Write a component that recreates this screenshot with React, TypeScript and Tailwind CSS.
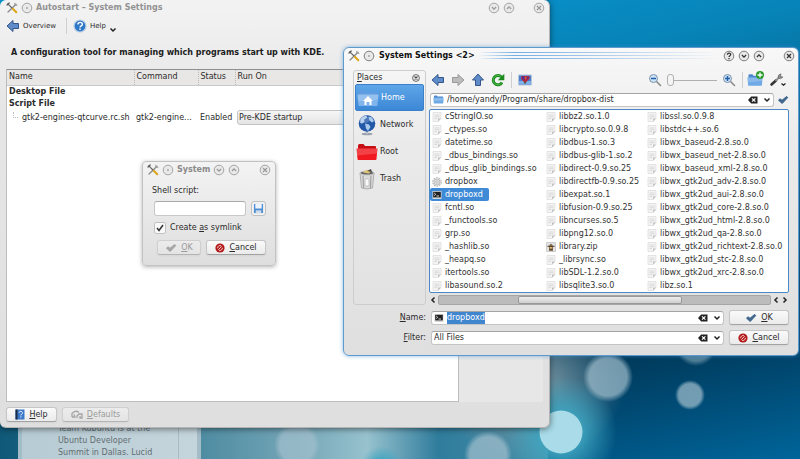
import type { ReactNode } from 'react';

const files = [
    ['cStringIO.so', '_ctypes.so', 'datetime.so', '_dbus_bindings.so', '_dbus_glib_bindings.so', 'dropbox', 'dropboxd', 'fcntl.so', '_functools.so', 'grp.so', '_hashlib.so', '_heapq.so', 'itertools.so', 'libasound.so.2'],
    ['libbz2.so.1.0', 'libcrypto.so.0.9.8', 'libdbus-1.so.3', 'libdbus-glib-1.so.2', 'libdirect-0.9.so.25', 'libdirectfb-0.9.so.25', 'libexpat.so.1', 'libfusion-0.9.so.25', 'libncurses.so.5', 'libpng12.so.0', 'library.zip', '_librsync.so', 'libSDL-1.2.so.0', 'libsqlite3.so.0'],
    ['libssl.so.0.9.8', 'libstdc++.so.6', 'libwx_baseud-2.8.so.0', 'libwx_baseud_net-2.8.so.0', 'libwx_baseud_xml-2.8.so.0', 'libwx_gtk2ud_adv-2.8.so.0', 'libwx_gtk2ud_aui-2.8.so.0', 'libwx_gtk2ud_core-2.8.so.0', 'libwx_gtk2ud_html-2.8.so.0', 'libwx_gtk2ud_qa-2.8.so.0', 'libwx_gtk2ud_richtext-2.8.so.0', 'libwx_gtk2ud_stc-2.8.so.0', 'libwx_gtk2ud_xrc-2.8.so.0', 'libz.so.1'],
];

function ToolsIcon() {
    return (
        <svg viewBox="0 0 12 12" className="size-3 shrink-0" fill="none" strokeLinecap="round">
            <path d="M10 2.200 2 10" stroke="#8b8b8b" strokeWidth="1.300" />
            <path d="M1.800 1.800 6 6" stroke="#666" strokeWidth="1.200" />
            <path d="M1 3 3.200 1" stroke="#555" strokeWidth="1.200" />
            <path d="m6.800 6.800 3.500 3.500" stroke="#dba51c" strokeWidth="2" />
            <path d="M8.800 1.200 9 3l2 .3" stroke="#999" strokeWidth="1" />
        </svg>
    );
}

type Glyph = 'dot' | 'help' | 'down' | 'up' | 'close';

function WindowButton({ glyph, label, faded }: { glyph: Glyph; label: string; faded?: boolean }) {
    const ink = faded ? '#9a9a9a' : '#333';
    return (
        <button aria-label={label} className="size-3 shrink-0">
            <svg viewBox="0 0 12 12" className="size-3" fill="none" stroke={ink} strokeWidth="1.3">
                <circle cx="6" cy="6" r="4.800" fill="#e9e9e9" stroke={faded ? '#9c9c9c' : '#707070'} strokeWidth="0.9" />
                {glyph === 'dot' && <circle cx="6" cy="6" r="0.8" fill="#777" stroke="none" />}
                {glyph === 'help' && <path d="M4.4 4.8c0-2.2 3.3-2.1 3.3-.2C7.700 5.700 6 5.700 6 7M6 8v1.200" />}
                {glyph === 'down' && <path d="m3.900 5 2.100 2.100L8.100 5" />}
                {glyph === 'up' && <path d="m3.900 7 2.100-2.100L8.100 7" />}
                {glyph === 'close' && <path d="m4 4 4 4m0-4L4 8" />}
            </svg>
        </button>
    );
}

function ArrowIcon({ dir, gray }: { dir: 'left' | 'right' | 'up'; gray?: boolean }) {
    const d = {
        left: 'M1 7 7 1.500v3h5.500v5H7v3z',
        right: 'M13 7 7 1.500v3H1.500v5H7v3z',
        up: 'M7 1 1.500 7h3v5.500h5V7h3z',
    }[dir];
    return (
        <svg viewBox="0 0 14 14" className="size-3.5 shrink-0">
            <path d={d} fill={gray ? '#bcbcbc' : '#5f8bc8'} stroke={gray ? '#999' : '#34568a'} strokeLinejoin="round" />
        </svg>
    );
}

function CheckIcon({ color }: { color: string }) {
    return (
        <svg viewBox="0 0 12 10" className="h-2.5 w-3 shrink-0">
            <path d="M1.500 5.200 3 3.800l2 1.500L9.500 1.500l1.300 1L5.200 8.500z" fill={color} stroke={color} strokeLinejoin="round" />
        </svg>
    );
}

function CancelIcon() {
    return (
        <svg viewBox="0 0 10 10" className="size-2.5 shrink-0">
            <circle cx="5" cy="5" r="4.600" fill="#b41a1a" />
            <path d="M2.600 5.200A2.500 2.500 0 0 1 6 2.700M7.400 4.800A2.500 2.500 0 0 1 4 7.300M3.300 6.700l3.400-3.400" fill="none" stroke="#f6dcdc" strokeWidth=".9" />
        </svg>
    );
}

function ClearIcon() {
    return (
        <svg viewBox="0 0 10 8" className="h-2 w-2.5">
            <path d="M0 4 3.200.500H9.500v7H3.200z" fill="#222" />
            <path d="m4 2.300 3.400 3.400m0-3.400L4 5.700" stroke="#fff" strokeWidth="1.200" />
        </svg>
    );
}

function Chevron() {
    return (
        <svg viewBox="0 0 8 6" className="h-1.5 w-2 shrink-0" fill="none">
            <path d="m1.500 1.500 2.500 2.500 2.500-2.500" stroke="#222" strokeWidth="1.500" />
        </svg>
    );
}

function FolderIcon({ className, color, lid }: { className: string; color: string; lid: string }) {
    return (
        <svg viewBox="0 0 22 18" className={className}>
            <path d="M2 2.500q0-1.500 1.500-1.500h4l1.500 2h10q1 0 1 1v5H2z" fill={lid} />
            <path d="M.500 5.500h21L20.500 16q0 1-1 1h-17q-1 0-1-1z" fill={color} />
            <path d="M.500 5.500h21l-.5 5-20 2z" fill="#fff" opacity=".18" />
        </svg>
    );
}

function FileIcon({ name }: { name: string }) {
    if (name === 'dropboxd') {
        return (
            <svg viewBox="0 0 10 10" className="size-2.5 shrink-0">
                <path d="M.500 1h9v8h-9z" fill="#d8d8d8" />
                <path d="M1.200 1.800h7.600v5.600H1.200z" fill="#222" />
                <path d="m2.200 3 1.500 1.300-1.500 1.300M4.500 6h2.500" fill="none" stroke="#fff" strokeWidth=".8" />
            </svg>
        );
    }
    if (name === 'dropbox') {
        return (
            <svg viewBox="0 0 10 10" className="size-2.5 shrink-0" fill="none">
                <circle cx="5" cy="5" r="4.200" stroke="#b5b5b5" strokeWidth="1.200" strokeDasharray="1.800 .8" />
                <circle cx="5" cy="5" r="3" fill="#ddd" stroke="#b8b8b8" strokeWidth=".8" />
                <circle cx="5" cy="5" r="1.100" fill="#fff" stroke="#aaa" strokeWidth=".6" />
            </svg>
        );
    }
    if (name === 'library.zip') {
        return (
            <svg viewBox="0 0 10 10" className="size-2.5 shrink-0">
                <path d="M.500.500h9v9h-9z" fill="#e2e2e2" stroke="#b5b5b5" strokeWidth=".6" />
                <path d="M3 4q2-4.500 4 0v5H3z" fill="#8a7355" />
                <path d="M1.500 4.300h7M3.500 7.300h3" stroke="#4b3d2c" />
                <path d="M4 5h2v1.500H4z" fill="#e0b95a" />
            </svg>
        );
    }
    return (
        <svg viewBox="0 0 10 10" className="size-2.5 shrink-0">
            <path d="M1 .500h8v6L6.300 9.500H1z" fill="#f4f4f4" stroke="#dadada" strokeWidth=".7" />
            <path d="M2.500 3h5M2.500 4.800h5M2.500 6.600h2.500" stroke="#ccc" strokeWidth=".7" />
            <path d="M6 9.500V6.500h3z" fill="#c2c2c2" />
        </svg>
    );
}

function PushButton({ children, className, disabled }: { children: ReactNode; className: string; disabled?: boolean }) {
    return (
        <button
            disabled={disabled}
            className={`flex h-[15px] items-center justify-center gap-1 rounded-[3px] border border-[#c6c6c6] border-b-[#a2a2a2] bg-linear-to-b from-[#fafafa] to-[#ebebeb] shadow-xs disabled:border-[#cfcfcf] disabled:border-b-[#b4b4b4] disabled:from-[#ececec] disabled:to-[#e4e4e4] disabled:text-[#9b9b9b] ${className}`}
        >
            {children}
        </button>
    );
}

function ComboButtons() {
    return (
        <>
            <button aria-label="Clear" className="shrink-0"><ClearIcon /></button>
            <button aria-label="Show list" className="flex shrink-0"><Chevron /></button>
        </>
    );
}

function MainWindow() {
    return (
        <section className="absolute top-0 right-[250px] bottom-[31px] left-0 flex flex-col rounded-md border-r border-b border-[#b4b4b4] bg-linear-to-b from-[#f3f3f3] via-[#e6e6e6] via-25% to-[#dfdfdf] px-1.5 shadow-[0_1px_6px_rgba(0,0,0,0.5)]">
            <header className="-mr-0.5 flex h-4 shrink-0 items-center gap-[3px]">
                <ToolsIcon />
                <WindowButton glyph="dot" label="Window menu" faded />
                <h1 className="grow font-bold text-[#929292]">Autostart – System Settings</h1>
                <WindowButton glyph="down" label="Minimize" faded />
                <WindowButton glyph="up" label="Maximize" faded />
                <span className="w-3" />
                <WindowButton glyph="close" label="Close" faded />
            </header>
            <nav className="flex h-5 shrink-0 items-center text-[7px]">
                <button className="flex items-center gap-[3px]"><ArrowIcon dir="left" />Overview</button>
                <span className="mr-1.5 ml-2.5 h-4 border-l border-[#cfcfcf]" />
                <button className="flex items-center gap-[3px]">
                    <svg viewBox="0 0 14 14" className="size-3.5">
                        <circle cx="7" cy="7" r="6" fill="#2f78c8" stroke="#b9cfe6" strokeWidth="1.200" />
                        <path d="M4.900 5.500c0-3 4.500-2.700 4.500-.2C9.400 7 7 6.800 7 8.500M7 9.600v1.500" fill="none" stroke="#fff" strokeWidth="1.400" />
                    </svg>
                    Help
                    <span className="pt-2"><Chevron /></span>
                </button>
            </nav>
            <h2 className="flex h-[33px] shrink-0 items-center pl-[5px] font-bold text-[#1c1c1c]">
                A configuration tool for managing which programs start up with KDE.
            </h2>
            <div className="flex min-h-0 grow flex-col bg-[#e7e7e7] pr-[84px]">
                <div className="grow border border-[#bdbdbd] border-t-[#8f8f8f] bg-white">
                    <table className="w-full table-fixed border-collapse">
                        <thead>
                            <tr className="h-[15px] border-b border-[#c9c9c9] bg-[#e9e7e5] text-left *:font-normal">
                                <th className="w-[127px] pl-0.5">Name</th>
                                <th className="w-16 border-l border-dotted border-[#bbb] pl-0.5">Command</th>
                                <th className="w-[37px] border-l border-dotted border-[#bbb] pl-0.5">Status</th>
                                <th className="border-l border-dotted border-[#bbb] pl-0.5">Run On</th>
                            </tr>
                        </thead>
                        <tbody>
                            <tr className="h-3"><td colSpan={4} className="pl-0.5 font-bold">Desktop File</td></tr>
                            <tr className="h-3"><td colSpan={4} className="pl-0.5 font-bold">Script File</td></tr>
                            <tr className="h-4 whitespace-nowrap">
                                <td>
                                    <div className="flex">
                                        <span className="mr-1 ml-1.5 h-1.5 w-[5px] border-b border-l border-dotted border-[#bbb]" />
                                        gtk2-engines-qtcurve.rc.sh
                                    </div>
                                </td>
                                <td className="pl-0.5">gtk2-engine...</td>
                                <td className="pl-0.5">Enabled</td>
                                <td className="pl-0.5">
                                    <select aria-label="Run on" className="block h-[15px] w-full appearance-none rounded-[3px] border border-[#c4c4c4] bg-linear-to-b from-[#f6f6f6] to-[#e4e4e4] pl-px">
                                        <option>Pre-KDE startup</option>
                                    </select>
                                </td>
                            </tr>
                        </tbody>
                    </table>
                </div>
            </div>
            <footer className="flex h-[25px] shrink-0 items-center gap-[5px]">
                <PushButton className="w-[51px]">
                    <svg viewBox="0 0 10 11" className="h-[11px] w-2.5">
                        <path d="M.500.500h9v10h-9z" fill="#3a78c9" />
                        <path d="M.500.500h2v10h-2z" fill="#1b2b45" />
                        <path d="M4.200 3.800c0-2 3.300-1.800 3.300 0 0 1.200-1.600 1.200-1.600 2.600M5.900 7.300v1.200" fill="none" stroke="#fff" />
                    </svg>
                    <span><u>H</u>elp</span>
                </PushButton>
                <PushButton className="w-[67px]" disabled>
                    <svg viewBox="0 0 12 9" className="h-[9px] w-3" fill="none" stroke="#a5a5a5" strokeWidth="1.300">
                        <path d="M1 7V3.500Q4.500-.500 8 2.500M1 7h3L3 4.500M6 8V6l2-2h3v4H9V6" />
                    </svg>
                    <span><u>D</u>efaults</span>
                </PushButton>
            </footer>
        </section>
    );
}

function ScriptDialog() {
    return (
        <section className="absolute top-[161px] left-[142px] flex w-[134px] flex-col rounded-[4px] border border-[#c2c2c2] bg-linear-to-b from-[#f3f3f3] to-[#dedede] px-[9px] pb-[10px] shadow-[0_1px_4px_rgba(0,0,0,0.3)]">
            <header className="-mr-[5px] -ml-[5px] flex h-4 items-center gap-[3px]">
                <ToolsIcon />
                <WindowButton glyph="dot" label="Window menu" faded />
                <h2 className="w-[33px] font-bold whitespace-nowrap text-[#8a8a8a]">System</h2>
                <WindowButton glyph="down" label="Minimize" faded />
                <WindowButton glyph="up" label="Maximize" faded />
                <span className="grow" />
                <WindowButton glyph="close" label="Close" faded />
            </header>
            <label htmlFor="script" className="pt-[7px] pb-1">Shell script:</label>
            <div className="flex items-center justify-between pl-0.5">
                <input id="script" className="h-[15px] w-[92px] rounded-[3px] border border-[#c8c8c8] border-t-[#a8a8a8] bg-white px-1" />
                <button aria-label="Choose file" className="flex size-[15px] items-center justify-center rounded-[3px] border border-[#c0c0c0] bg-[#f3f3f3]">
                    <svg viewBox="0 0 12 12" className="size-[11px]">
                        <path d="M1 1h10v10H1z" fill="#4f8ed0" />
                        <path d="M2.500 1h7v5h-7z" fill="#eef4fb" />
                        <path d="M3 8h6v3H3z" fill="#cfdcea" />
                    </svg>
                </button>
            </div>
            <div className="flex h-6 items-center gap-1 pl-0.5">
                <span className="grid place-items-center *:col-start-1 *:row-start-1">
                    <input id="symlink" type="checkbox" defaultChecked className="peer size-3 appearance-none rounded-[2px] border border-[#c2c2c2] bg-[#f8f8f8]" />
                    <svg viewBox="0 0 8 8" className="pointer-events-none invisible size-2 peer-checked:visible" fill="none"><path d="m1 4 2 2.500L7 1" stroke="#333" strokeWidth="1.500" /></svg>
                </span>
                <label htmlFor="symlink">Create <u>a</u>s symlink</label>
            </div>
            <div className="flex justify-end gap-[5px]">
                <PushButton className="w-11" disabled><CheckIcon color="#a5a5a5" /><span><u>O</u>K</span></PushButton>
                <PushButton className="w-[60px]"><CancelIcon /><span><u>C</u>ancel</span></PushButton>
            </div>
        </section>
    );
}

function Places() {
    return (
        <aside className="flex w-[73px] shrink-0 flex-col rounded-[3px] border border-[#cdcdcd] p-px">
            <div className="flex h-3 items-center justify-between pr-1 pl-0.5">
                <h3><u>P</u>laces</h3>
                <button aria-label="Close places">
                    <svg viewBox="0 0 8 8" className="size-2" fill="none" stroke="#444">
                        <circle cx="4" cy="4" r="3.400" strokeWidth=".8" />
                        <path d="m2.500 2.500 3 3m0-3-3 3" strokeWidth="1.100" />
                    </svg>
                </button>
            </div>
            <ul className="*:flex *:h-[27px] *:items-center *:gap-0.5 *:pl-px">
                <li className="rounded-[2px] border border-[#3b80cb] bg-linear-to-b from-[#5ea6e8] to-[#3d88d6] text-white">
                    <span className="relative">
                        <FolderIcon className="h-[18px] w-[22px]" color="#7fb4ec" lid="#5f9de0" />
                        <svg viewBox="0 0 10 9" className="absolute top-[7px] left-1.5 h-[9px] w-2.5"><path d="M0 5 5 0l5 5H8.500v4h-2V6h-3v3h-2V5z" fill="#fff" /></svg>
                    </span>
                    Home
                </li>
                <li>
                    <svg viewBox="0 0 22 22" className="size-[22px]">
                        <ellipse cx="11" cy="20" rx="5.500" ry="1.300" fill="#9aa3ad" />
                        <path d="M10 17h2v3h-2z" fill="#b5bcc4" />
                        <circle cx="11" cy="9.500" r="8.300" fill="#2358a8" />
                        <path d="M4.500 5q3-3.500 6-3.300l.5 2-3 2 .5 2-2.500 2-2-1zM12.500 2.500l3.500 1 2 3.500-2 1.500-2.500-2zM9 9.500l4 1 1.500 2.500-2.500 4-2-2.500z" fill="#a9c9ec" />
                        <ellipse cx="9" cy="5.500" rx="5" ry="3.500" fill="#fff" opacity=".2" />
                    </svg>
                    Network
                </li>
                <li>
                    <FolderIcon className="h-[18px] w-[22px]" color="#f0191f" lid="#c50f14" />
                    Root
                </li>
                <li>
                    <svg viewBox="0 0 22 22" className="size-[22px]">
                        <path d="M4 5h14l-1.500 15q-5.500 2-11 0z" fill="#dadada" stroke="#999" strokeWidth=".7" />
                        <path d="M7 7.500 7.500 20M15 7.500 14.500 20" stroke="#9a9a9a" />
                        <path d="M9 12.500 11 10l2 2.500V18H9z" fill="#f8f8f8" stroke="#aaa" strokeWidth=".6" />
                        <ellipse cx="11" cy="5" rx="7" ry="2" fill="#666" stroke="#c8c8c8" />
                        <path d="m7 4.500 3-2.500 5 1-2 2.500z" fill="#e3c772" />
                        <path d="m11 3 4-2 1 3z" fill="#444" />
                    </svg>
                    Trash
                </li>
            </ul>
        </aside>
    );
}

function Magnifier({ plus }: { plus?: boolean }) {
    return (
        <svg viewBox="0 0 14 14" className="size-3.5 shrink-0" fill="none">
            <path d="m8.500 8.500 4 4" stroke="#8a8a8a" strokeWidth="1.600" strokeLinecap="round" />
            <circle cx="5.500" cy="5.500" r="4" fill="#cfe3f6" stroke="#7d92a8" />
            <path d={plus ? 'M3 5.500h5M5.500 3v5' : 'M3 5.500h5'} stroke="#1f5fa8" strokeWidth="1.500" />
        </svg>
    );
}

function FileToolbar() {
    return (
        <div className="flex h-5 items-center gap-1.5 pr-0.5 pl-0.5">
            <button aria-label="Back"><ArrowIcon dir="left" /></button>
            <button aria-label="Forward"><ArrowIcon dir="right" gray /></button>
            <button aria-label="Up"><ArrowIcon dir="up" /></button>
            <button aria-label="Reload">
                <svg viewBox="0 0 14 14" className="size-3.5" fill="none">
                    <path d="M11 9.500A4.700 4.700 0 1 1 10.500 4" stroke="#1d8a20" strokeWidth="3" />
                    <path d="M11 9.500A4.700 4.700 0 1 1 10.500 4" stroke="#4db74a" strokeWidth="1" />
                    <path d="M13.300.800v6.500H6.800z" fill="#1d8a20" />
                </svg>
            </button>
            <span className="h-4 border-l border-[#cfcfcf]" />
            <button aria-label="Preview">
                <svg viewBox="0 0 14 12" className="h-3 w-3.5">
                    <path d="M.500 1h13v10H.500z" fill="#4a7fd0" stroke="#b8c4d8" />
                    <path d="M1 7h12v3.500H1z" fill="#7fb0ea" />
                    <path d="M3.500 2h7.500l1 2-5 5.500L3 4.500z" fill="#b5263f" />
                    <path d="m4 2 3 1-1 3-2-1zM8.500 3 11 2.500 9 6z" fill="#5b2d8a" />
                    <path d="m6.500 3 2 .500-.5 2z" fill="#e8893a" />
                    <path d="M7 7.500V10" stroke="#2c6b2c" />
                </svg>
            </button>
            <span className="grow" />
            <Magnifier />
            <input
                type="range"
                aria-label="Icon size"
                min="0"
                max="100"
                defaultValue="0"
                className="-mx-px h-3 w-[50px] appearance-none bg-[linear-gradient(#b0b0b0,#b0b0b0)] bg-[length:100%_1px] bg-center bg-no-repeat [&::-webkit-slider-thumb]:h-3 [&::-webkit-slider-thumb]:w-[7px] [&::-webkit-slider-thumb]:appearance-none [&::-webkit-slider-thumb]:rounded-[3px] [&::-webkit-slider-thumb]:border [&::-webkit-slider-thumb]:border-[#b0b0b0] [&::-webkit-slider-thumb]:bg-[#f4f4f4]"
            />
            <Magnifier plus />
            <span className="h-4 border-l border-[#cfcfcf]" />
            <button aria-label="New folder" className="relative -ml-0.5">
                <FolderIcon className="h-3.5 w-4" color="#6fa9e6" lid="#4c89cf" />
                <svg viewBox="0 0 8 8" className="absolute -top-0.5 -right-px size-2">
                    <circle cx="4" cy="4" r="4" fill="#2a9c2a" />
                    <path d="M4 1.500v5M1.500 4h5" stroke="#fff" strokeWidth="1.300" />
                </svg>
            </button>
            <button aria-label="Options">
                <svg viewBox="0 0 18 14" className="h-3.5 w-[18px]" fill="none">
                    <path d="m2.500 11.500 4.500-4" stroke="#333" strokeWidth="2.600" strokeLinecap="round" />
                    <path d="m6.500 8 3-3" stroke="#8a8a8a" strokeWidth="1.800" />
                    <path d="M12 .800Q8.500 1.500 9 5q2.500 2 5-1l-2.500-.500z" fill="#888" stroke="#666" strokeWidth=".6" />
                    <path d="m12.500 10.500 2 1.800 2-1.800" stroke="#222" strokeWidth="1.200" />
                </svg>
            </button>
        </div>
    );
}

function FileDialog() {
    return (
        <section className="absolute top-[47px] right-px left-[343px] flex flex-col rounded-md border border-[#5e9acb] bg-linear-to-b from-[#f8f8f8] via-[#ebebeb] via-30% to-[#dfdfdf] px-[9px] pb-[10px] shadow-[0_0_4px_rgba(60,140,210,0.6)]">
            <header className="-mr-1.5 -ml-[5px] flex h-[15px] items-center gap-[3px]">
                <ToolsIcon />
                <WindowButton glyph="dot" label="Window menu" />
                <h2 className="pl-px font-bold text-[#111]">System Settings &lt;2&gt;</h2>
                <div className="flex h-[7px] grow flex-col justify-between *:h-px *:bg-linear-to-r *:from-transparent *:via-[#74ade4] *:via-15% *:to-transparent">
                    <span />
                    <span />
                    <span />
                </div>
                <WindowButton glyph="help" label="Help" />
                <WindowButton glyph="down" label="Minimize" />
                <WindowButton glyph="up" label="Maximize" />
                <span className="w-3" />
                <WindowButton glyph="close" label="Close" />
            </header>
            <div className="flex gap-[3px] pt-[7px]">
                <Places />
                <div className="flex min-w-0 grow flex-col">
                    <FileToolbar />
                    <div className="flex h-[19px] items-center gap-[3px] pl-px">
                        <div className="flex h-3.5 grow items-center gap-[5px] rounded-[3px] border border-[#c4c4c4] border-t-[#a4a4a4] bg-white px-0.5">
                            <FolderIcon className="h-[9px] w-[11px] shrink-0" color="#6fa9e6" lid="#4c89cf" />
                            <input aria-label="Location" defaultValue="/home/yandy/Program/share/dropbox-dist" className="-ml-0.5 w-full min-w-0" />
                            <ComboButtons />
                        </div>
                        <button aria-label="Go"><CheckIcon color="#40658c" /></button>
                    </div>
                    <div className="grid grid-cols-[114px_101px_auto] rounded-[2px] border border-[#4c88c6] bg-white">
                        {files.map((column) => (
                            <ul key={column[0]}>
                                {column.map((name) => (
                                    <li key={name} className="flex h-[13px]">
                                        <span className={name === 'dropboxd' ? 'flex items-center gap-[3px] rounded-[2px] bg-[#3f8ad6] pr-1.5 pl-0.5 text-white' : 'flex items-center gap-[3px] pl-0.5 text-[#333]'}>
                                            <FileIcon name={name} />
                                            {name}
                                        </span>
                                    </li>
                                ))}
                            </ul>
                        ))}
                    </div>
                    <div className="flex h-3 items-end gap-px text-[#222]">
                        <button aria-label="Scroll left" className="flex h-2.5 w-2 rotate-90 items-center"><Chevron /></button>
                        <div className="flex h-2.5 grow rounded-[2px] border border-[#a5a5a5] bg-[#bcbcbc] pl-[22%]">
                            <div className="w-[65%] rounded-[2px] border border-[#999] bg-linear-to-b from-[#eee] to-[#cfcfcf]" />
                        </div>
                        <button aria-label="Scroll back" className="flex h-2.5 w-2 rotate-90 items-center"><Chevron /></button>
                        <button aria-label="Scroll right" className="flex h-2.5 w-2 -rotate-90 items-center"><Chevron /></button>
                    </div>
                </div>
            </div>
            <div className="grid grid-cols-[73px_1fr_60px] items-center gap-x-[5px] gap-y-[5px] pt-[5px]">
                <label htmlFor="name" className="text-right"><u>N</u>ame:</label>
                <div className="flex h-3.5 items-center gap-[5px] rounded-[3px] border border-[#c4c4c4] border-t-[#a4a4a4] bg-white px-0.5">
                    <FileIcon name="dropboxd" />
                    <input id="name" defaultValue="dropboxd" className="-ml-0.5 field-sizing-content bg-[#3f86cf] text-white" />
                    <span className="grow" />
                    <ComboButtons />
                </div>
                <PushButton className="w-full"><CheckIcon color="#40658c" /><span><u>O</u>K</span></PushButton>
                <label htmlFor="filter" className="text-right"><u>F</u>ilter:</label>
                <div className="flex h-3.5 items-center gap-[5px] rounded-[3px] border border-[#c4c4c4] border-t-[#a4a4a4] bg-white px-0.5">
                    <select id="filter" className="grow appearance-none">
                        <option>All Files</option>
                    </select>
                    <ComboButtons />
                </div>
                <PushButton className="w-full"><CancelIcon /><span><u>C</u>ancel</span></PushButton>
            </div>
        </section>
    );
}

function Wallpaper() {
    return (
        <svg viewBox="0 0 800 459" preserveAspectRatio="none" className="absolute inset-0 size-full">
            <defs>
                <linearGradient id="shore">
                    <stop offset="0" stopColor="#0f5877" />
                    <stop offset=".36" stopColor="#4d8ba1" />
                    <stop offset=".54" stopColor="#74a5b6" />
                    <stop offset=".67" stopColor="#97c2ce" />
                    <stop offset=".8" stopColor="#2f7c9c" />
                    <stop offset="1" stopColor="#4a8fa8" />
                </linearGradient>
                <radialGradient id="haze">
                    <stop offset=".2" stopColor="#6f8f9d" />
                    <stop offset="1" stopColor="#6f8f9d" stopOpacity="0" />
                </radialGradient>
                <radialGradient id="glow">
                    <stop offset=".3" stopColor="#3fa5c0" />
                    <stop offset="1" stopColor="#3fa5c0" stopOpacity="0" />
                </radialGradient>
                <radialGradient id="bubble">
                    <stop offset=".75" stopColor="#a3c0ce" stopOpacity=".7" />
                    <stop offset="1" stopColor="#a3c0ce" stopOpacity="0" />
                </radialGradient>
            </defs>
            <rect y="400" width="548" height="59" fill="url(#shore)" />
            <ellipse cx="530" cy="385" rx="95" ry="75" fill="url(#haze)" />
            <circle cx="561" cy="432" r="56" fill="url(#glow)" />
            <circle cx="561" cy="432" r="21.500" fill="#a9dbe8" />
            <circle cx="382" cy="468" r="22" fill="url(#glow)" />
            <circle cx="297" cy="445" r="23" fill="url(#bubble)" />
            <circle cx="488" cy="455" r="24" fill="url(#bubble)" />
            <circle cx="608" cy="377" r="25" fill="url(#bubble)" />
            <circle cx="690" cy="395" r="15" fill="url(#bubble)" />
            <circle cx="696" cy="345" r="21" fill="url(#bubble)" opacity=".7" />
        </svg>
    );
}

export default function App() {
    return (
        <main className="relative h-screen w-full overflow-hidden bg-[linear-gradient(168deg,#0aa0de_0%,#0784b8_28%,#00334f_74%,#00456c_84%,#00659a_100%)] font-['DejaVu_Sans',sans-serif] text-[8px]/[12px] text-[#2b2b2b]">
            <Wallpaper />
            <aside className="absolute bottom-0 left-[18px] w-[183px] border-x-4 border-[#a3bcc8] bg-linear-to-r from-[#b7cbd4] to-[#c5d5dc] pl-9 text-[#626d72]">
                <p className="mr-[18px] border-r border-[#a9bcc4]">Team Kubuntu is at the<br />Ubuntu Developer<br />Summit in Dallas. Lucid</p>
            </aside>
            <MainWindow />
            <ScriptDialog />
            <FileDialog />
        </main>
    );
}
